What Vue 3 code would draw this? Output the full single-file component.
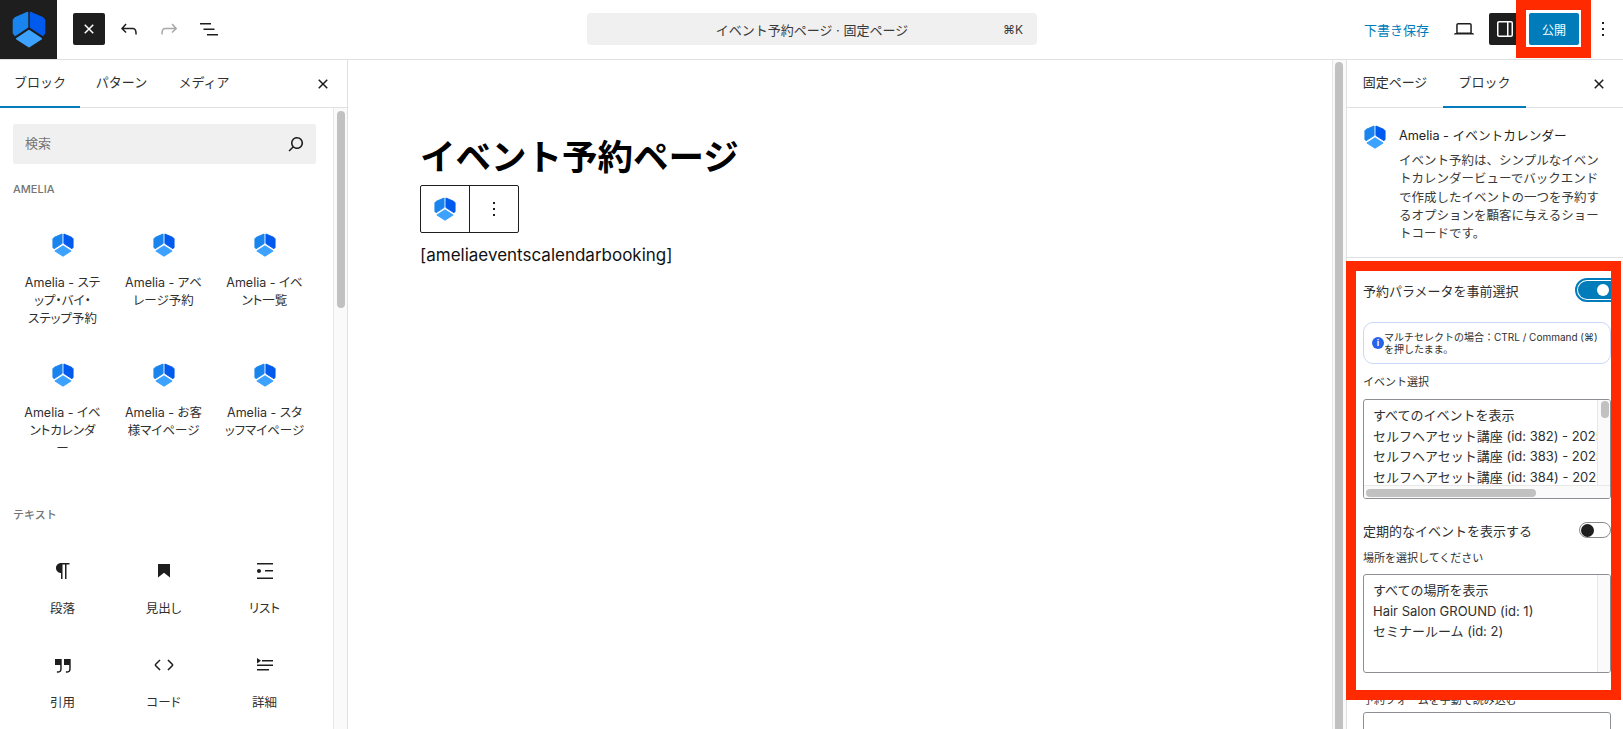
<script setup>
const ameliaBlocks = [
  'Amelia - ステ\nップ・バイ・\nステップ予約',
  'Amelia - アベ\nレージ予約',
  'Amelia - イベ\nント一覧',
  'Amelia - イベ\nントカレンダ\nー',
  'Amelia - お客\n様マイページ',
  'Amelia - スタ\nッフマイページ',
]

const textBlocks = [
  { label: '段落', d: 'M9.996 14v-.225l.004.0001V20h1.5V5.5H14V20h1.5V5.5h3V4H9.996c-2.761 0-5 2.239-5 5s2.239 5 5 5z' },
  { label: '見出し', d: 'M6 5V18.59L12 13.85L18 18.59V5H6Z' },
  { label: 'リスト', d: 'M4 4v1.5h16V4H4zm8 8.5h8V11h-8v1.5zM4 20h16v-1.5H4V20zm4-8c0-1.1-.9-2-2-2s-2 .9-2 2 .9 2 2 2 2-.9 2-2z' },
  { label: '引用', d: 'M13 6v6h5.2v4c0 .8-.2 1.4-.5 1.7-.6.6-1.6.6-2.5.5h-.3v1.5h.5c1 0 2.3-.1 3.3-1 .6-.6 1-1.6 1-2.8V6H13zm-9 6h5.2v4c0 .8-.2 1.4-.5 1.7-.6.6-1.6.6-2.5.5h-.3v1.5h.5c1 0 2.3-.1 3.3-1 .6-.6 1-1.6 1-2.8V6H4v6z' },
  { label: 'コード', d: 'M20.8 10.7l-4.3-4.3-1.1 1.1 4.3 4.3c.1.1.1.3 0 .4l-4.3 4.3 1.1 1.1 4.3-4.3c.7-.8.7-1.9 0-2.6zM4.2 11.8l4.3-4.3-1-1-4.3 4.3c-.7.7-.7 1.8 0 2.5l4.3 4.3 1.1-1.1-4.3-4.3c-.2-.1-.2-.3-.1-.4z' },
  { label: '詳細', d: 'M4 16h12v1.5H4V16Zm0-4.5h16V13H4v-1.5ZM9 7h11v1.5H9V7ZM4 5l4 2.75-4 2.75V5Z' },
]

const eventOptions = [
  'すべてのイベントを表示',
  'セルフヘアセット講座 (id: 382) - 2025',
  'セルフヘアセット講座 (id: 383) - 2025',
  'セルフヘアセット講座 (id: 384) - 2025',
]

const locationOptions = ['すべての場所を表示', 'Hair Salon GROUND (id: 1)', 'セミナールーム (id: 2)']

const closeIcon = 'M12 13.06l3.712 3.713 1.061-1.06L13.061 12l3.712-3.712-1.06-1.06L12 10.938 8.288 7.227l-1.061 1.06L10.939 12l-3.712 3.712 1.06 1.061L12 13.061z'
const kebabIcon = 'M13 19h-2v-2h2v2zm0-6h-2v-2h2v2zm0-6h-2V5h2v2z'
</script>

<template>
  <div class="editor">
    <svg class="defs" width="0" height="0">
      <symbol id="amelia" viewBox="0 0 24 26">
        <path d="M11 1 2.5 4.6 1 6.2v9.3l1.2 1.6L11 11.4Z" fill="#1a84ee" stroke="#1a84ee" stroke-linejoin="round" />
        <path d="M13 1 21.5 4.6 23 6.2v9.3l-1.2 1.6L13 11.4Z" fill="#005aee" stroke="#005aee" stroke-linejoin="round" />
        <path d="M12 14 20.5 19.5 12 25 3.5 19.5Z" fill="#3da2ff" stroke="#3da2ff" stroke-width="1.4" stroke-linejoin="round" />
      </symbol>
    </svg>

    <header class="topbar">
      <div class="logo"><svg width="34" height="37"><use href="#amelia" /></svg></div>
      <div class="tools">
        <button class="close-btn">
          <svg width="24" height="24" viewBox="0 0 24 24"><path :d="closeIcon" fill="#fff" /></svg>
        </button>
        <svg class="tool" width="24" height="24" viewBox="0 0 24 24"><path d="M18.3 11.7c-.6-.6-1.4-.9-2.3-.9H6.7l2.9-3.3-1.1-1-4.5 5L8.5 16l1-1-2.7-2.7H16c.5 0 .9.2 1.3.5 1 1 1 3.4 1 4.5v.3h1.5v-.2c0-1.5 0-4.3-1.5-5.7z" /></svg>
        <svg class="tool off" width="24" height="24" viewBox="0 0 24 24"><path d="M15.6 6.5l-1.1 1 2.9 3.3H8c-.9 0-1.7.3-2.3.9-1.4 1.5-1.4 4.2-1.4 5.6v.2h1.5v-.3c0-1.1 0-3.5 1-4.5.3-.3.7-.5 1.3-.5h9.2L14.5 15l1.1 1.1 4.6-4.6-4.6-5z" /></svg>
        <svg class="tool" width="24" height="24" viewBox="0 0 24 24"><path d="M3 6h11v1.5H3V6zm3.5 5.5h11V13h-11v-1.5zM21 17H10v1.5h11V17z" /></svg>
      </div>
      <div class="command">
        <span class="command-title">イベント予約ページ · 固定ページ</span>
        <span class="command-key">⌘K</span>
      </div>
      <div class="actions">
        <span class="draft">下書き保存</span>
        <svg class="tool laptop" width="24" height="24" viewBox="0 0 24 24"><path d="M20.5 16h-.7V8c0-1.1-.9-2-2-2H6.2c-1.1 0-2 .9-2 2v8h-.7c-.8 0-1.5.7-1.5 1.5h20c0-.8-.7-1.5-1.5-1.5zM5.7 8c0-.3.2-.5.5-.5h11.6c.3 0 .5.2.5.5v7.6H5.7V8z" /></svg>
        <span class="sidebar-btn">
          <svg width="24" height="24" viewBox="0 0 24 24"><path d="M18 4H6c-1.1 0-2 .9-2 2v12c0 1.1.9 2 2 2h12c1.1 0 2-.9 2-2V6c0-1.1-.9-2-2-2zm-4 14.5H6c-.3 0-.5-.2-.5-.5V6c0-.3.2-.5.5-.5h8v13zm4.5-.5c0 .3-.2.5-.5.5h-2.5v-13H18c.3 0 .5.2.5.5v12z" fill="#fff" /></svg>
        </span>
        <button class="publish">公開</button>
        <svg class="tool kebab" width="24" height="24" viewBox="0 0 24 24"><path :d="kebabIcon" /></svg>
      </div>
    </header>

    <div class="workspace">
      <aside class="inserter">
        <div class="tabs">
          <span class="tab active">ブロック</span>
          <span class="tab">パターン</span>
          <span class="tab">メディア</span>
          <svg class="tab-close" width="24" height="24" viewBox="0 0 24 24"><path :d="closeIcon" /></svg>
        </div>
        <div class="inserter-body">
          <div class="inserter-list">
            <div class="search">
              <span>検索</span>
              <svg width="24" height="24" viewBox="0 0 24 24"><path d="M13 5c-3.3 0-6 2.7-6 6 0 1.4.5 2.7 1.3 3.7l-3.8 3.8 1.1 1.1 3.8-3.8c1 .8 2.3 1.3 3.7 1.3 3.3 0 6-2.7 6-6S16.3 5 13 5zm0 10.5c-2.5 0-4.5-2-4.5-4.5s2-4.5 4.5-4.5 4.5 2 4.5 4.5-2 4.5-4.5 4.5z" fill="#1e1e1e" /></svg>
            </div>
            <h3 class="group-title">AMELIA</h3>
            <div class="block-grid amelia-grid">
              <div v-for="name in ameliaBlocks" :key="name" class="block-item">
                <svg width="22" height="24"><use href="#amelia" /></svg>
                <span>{{ name }}</span>
              </div>
            </div>
            <h3 class="group-title text-title">テキスト</h3>
            <div class="block-grid text-grid">
              <div v-for="item in textBlocks" :key="item.label" class="block-item">
                <svg width="24" height="24" viewBox="0 0 24 24"><path :d="item.d" fill="#1e1e1e" /></svg>
                <span>{{ item.label }}</span>
              </div>
            </div>
          </div>
          <div class="scroll-track"><div class="scroll-thumb"></div></div>
        </div>
      </aside>

      <main class="canvas">
        <div class="page">
          <h1>イベント予約ページ</h1>
          <div class="block-toolbar">
            <span class="toolbar-cell"><svg width="22" height="24"><use href="#amelia" /></svg></span>
            <span class="toolbar-cell">
              <svg width="24" height="24" viewBox="0 0 24 24"><path :d="kebabIcon" fill="#1e1e1e" /></svg>
            </span>
          </div>
          <p class="shortcode">[ameliaeventscalendarbooking]</p>
        </div>
        <div class="canvas-scroll"><div class="canvas-thumb"></div></div>
      </main>

      <aside class="settings">
        <div class="tabs settings-tabs">
          <span class="tab">固定ページ</span>
          <span class="tab active">ブロック</span>
          <svg class="tab-close" width="24" height="24" viewBox="0 0 24 24"><path :d="closeIcon" /></svg>
        </div>
        <div class="block-card">
          <svg width="22" height="24"><use href="#amelia" /></svg>
          <div>
            <div class="card-title">Amelia - イベントカレンダー</div>
            <p class="card-desc">イベント予約は、シンプルなイベントカレンダービューでバックエンドで作成したイベントの一つを予約するオプションを顧客に与えるショートコードです。</p>
          </div>
        </div>
        <div class="params">
          <div class="switch-row">
            <span>予約パラメータを事前選択</span>
            <span class="switch on"><i></i></span>
          </div>
          <div class="notice">
            <span class="notice-icon">i</span>
            <span>マルチセレクトの場合：CTRL / Command (⌘) を押したまま。</span>
          </div>
          <label class="field-label">イベント選択</label>
          <div class="listbox events">
            <div class="options">
              <div v-for="o in eventOptions" :key="o">{{ o }}</div>
            </div>
            <div class="v-track"><div class="v-thumb"></div></div>
            <div class="h-track"><div class="h-thumb"></div></div>
          </div>
          <div class="switch-row second">
            <span>定期的なイベントを表示する</span>
            <span class="switch"><i></i></span>
          </div>
          <label class="field-label place">場所を選択してください</label>
          <div class="listbox places">
            <div class="options">
              <div v-for="o in locationOptions" :key="o">{{ o }}</div>
            </div>
            <div class="v-track"></div>
          </div>
          <label class="field-label manual">予約フォームを手動で読み込む</label>
          <div class="manual-input"></div>
        </div>
      </aside>
    </div>

    <!-- red annotation boxes from the article screenshot -->
    <div class="mark mark-publish"></div>
    <div class="mark mark-params"></div>
  </div>
</template>

<style scoped>
.editor {
  position: relative;
  width: 1623px;
  height: 729px;
  overflow: hidden;
  display: flex;
  flex-direction: column;
  background: #fff;
  color: #1e1e1e;
  font-family: Inter, "Noto Sans CJK JP", sans-serif;
  font-size: 13px;
}

.defs {
  position: absolute;
}

button {
  border: 0;
  padding: 0;
  font: inherit;
}

/* Top bar */
.topbar {
  height: 60px;
  flex: none;
  display: flex;
  align-items: flex-start;
  border-bottom: 1px solid #e0e0e0;
  box-sizing: border-box;
}

.logo {
  width: 57px;
  height: 59px;
  background: #1e1e1e;
  display: flex;
  align-items: center;
  justify-content: center;
}

.tools {
  display: flex;
  align-items: center;
  height: 32px;
  margin: 13px 0 0 16px;
  width: 514px;
}

.close-btn {
  width: 32px;
  height: 32px;
  background: #1e1e1e;
  border-radius: 2px;
  display: flex;
  align-items: center;
  justify-content: center;
  margin-right: 12px;
}

.tool {
  fill: #1e1e1e;
  flex: none;
}

.tools .tool {
  margin-right: 16px;
}

.tool.off {
  fill: #a8a8a8;
}

.command {
  width: 450px;
  height: 32px;
  margin-top: 13px;
  background: #f0f0f0;
  border-radius: 4px;
  display: flex;
  align-items: center;
  position: relative;
  justify-content: center;
  font-size: 13px;
  color: #3a3a3a;
}

.command-key {
  position: absolute;
  right: 14px;
  font-size: 12px;
}

.actions {
  flex: 1;
  display: flex;
  align-items: center;
  height: 32px;
  margin-top: 13px;
  padding-left: 327px;
}

.draft {
  color: #007cba;
  font-size: 13px;
  width: 64px;
  white-space: nowrap;
}

.laptop {
  margin-left: 24px;
}

.sidebar-btn {
  width: 32px;
  height: 32px;
  margin-left: 13px;
  background: #1e1e1e;
  border-radius: 2px;
  display: flex;
  align-items: center;
  justify-content: center;
  flex: none;
}

.publish {
  width: 50px;
  height: 32px;
  margin-left: 8px;
  background: #007cba;
  color: #fff;
  border-radius: 2px;
  font-size: 12px;
  flex: none;
}

.kebab {
  margin-left: 12px;
}

/* Panels */
.workspace {
  flex: 1;
  min-height: 0;
  display: flex;
}

.tabs {
  height: 48px;
  flex: none;
  display: flex;
  align-items: stretch;
  border-bottom: 1px solid #e0e0e0;
  box-sizing: border-box;
  position: relative;
}

.tab {
  display: flex;
  align-items: center;
  justify-content: center;
  width: 80px;
  padding-bottom: 4px;
  box-sizing: border-box;
  position: relative;
  font-size: 13px;
  color: #2f2f2f;
}

.tab.active::after {
  content: "";
  position: absolute;
  left: 0;
  right: 0;
  bottom: -1px;
  height: 2px;
  background: #007cba;
}

.tab-close {
  position: absolute;
  right: 12px;
  top: 12px;
  fill: #1e1e1e;
}

.inserter {
  width: 348px;
  flex: none;
  display: flex;
  flex-direction: column;
  border-right: 1px solid #e0e0e0;
  box-sizing: border-box;
}

.inserter .tab:nth-child(2) {
  width: 83px;
}

.inserter .tab:nth-child(3) {
  width: 82px;
}

.inserter-body {
  flex: 1;
  min-height: 0;
  display: flex;
}

.inserter-list {
  flex: 1;
  min-width: 0;
  padding: 16px 17px 0 13px;
  overflow: hidden;
}

.search {
  height: 40px;
  background: #f0f0f0;
  border-radius: 2px;
  display: flex;
  align-items: center;
  justify-content: space-between;
  padding: 0 8px 0 12px;
  color: #757575;
  font-size: 13px;
}

.search span {
  padding-bottom: 3px;
}

.group-title {
  margin: 18px 0 0;
  font-size: 11px;
  line-height: 14px;
  font-weight: 500;
  color: #757575;
}

.text-title {
  margin-top: 0;
}

.block-grid {
  display: grid;
  grid-template-columns: repeat(3, 101px);
  margin-left: -1px;
}

.amelia-grid {
  grid-auto-rows: 130px;
  margin-top: 37px;
  height: 275px;
}

.text-grid {
  grid-auto-rows: 94px;
  margin-top: 37px;
}

.block-item {
  display: flex;
  flex-direction: column;
  align-items: center;
  text-align: center;
  font-size: 12.5px;
  line-height: 18px;
  color: #2f2f2f;
}

.block-item span {
  margin-top: 17px;
  white-space: pre-line;
  font-feature-settings: "palt";
}

.text-grid .block-item span {
  margin-top: 17px;
}

.scroll-track {
  width: 14px;
  flex: none;
  background: #fafafa;
  border-left: 1px solid #e8e8e8;
  box-sizing: border-box;
}

.scroll-thumb {
  width: 8px;
  height: 197px;
  margin: 3px 0 0 3px;
  border-radius: 4px;
  background: #c1c1c1;
}

.canvas {
  flex: 1;
  min-width: 0;
  display: flex;
}

.page {
  flex: 1;
  padding: 60px 0 0 72px;
}

h1 {
  margin: 14px 0 0;
  font-size: 35.5px;
  line-height: 48px;
  font-weight: 700;
  color: #000;
  white-space: nowrap;
}

.block-toolbar {
  display: inline-flex;
  margin-top: 3px;
  border: 1px solid #1e1e1e;
  border-radius: 2px;
  height: 48px;
  box-sizing: border-box;
  vertical-align: top;
}

.toolbar-cell {
  width: 48px;
  display: flex;
  align-items: center;
  justify-content: center;
}

.toolbar-cell + .toolbar-cell {
  border-left: 1px solid #1e1e1e;
}

.shortcode {
  margin: 10px 0 0;
  font-size: 17px;
  line-height: 24px;
  color: #111;
}

.canvas-scroll {
  width: 14px;
  flex: none;
  border-left: 1px solid #e8e8e8;
  background: #fafafa;
  box-sizing: border-box;
}

.canvas-thumb {
  width: 8px;
  height: 800px;
  margin: 2px 0 0 2px;
  border-radius: 4px;
  background: #c1c1c1;
}

.settings {
  width: 277px;
  flex: none;
  display: flex;
  flex-direction: column;
  border-left: 1px solid #e0e0e0;
  box-sizing: border-box;
}

.settings .tab:nth-child(1) {
  width: 96px;
}

.settings .tab:nth-child(2) {
  width: 83px;
}

.block-card {
  display: flex;
  gap: 13px;
  padding: 16px 0 15px 17px;
  border-bottom: 1px solid #e0e0e0;
  flex: none;
  height: 150px;
  box-sizing: border-box;
}

.block-card > svg {
  flex: none;
  margin-top: 1px;
}

.card-title {
  font-size: 12.7px;
  line-height: 18px;
  margin-top: 3px;
}

.card-desc {
  margin: 7px 0 0;
  width: 210px;
  font-size: 12.5px;
  line-height: 18.3px;
  color: #3a3a3a;
  word-break: break-all;
}

.params {
  padding: 20px 0 0 16px;
  width: 264px;
  box-sizing: border-box;
}

.switch-row {
  display: flex;
  justify-content: space-between;
  align-items: center;
  height: 24px;
  font-size: 13px;
  white-space: nowrap;
  color: #2f2f2f;
}

.switch {
  width: 32px;
  height: 16px;
  border: 1px solid #8a8a8a;
  border-radius: 9px;
  box-sizing: border-box;
  display: flex;
  align-items: center;
  padding-left: 1px;
  flex: none;
}

.switch i {
  width: 13px;
  height: 13px;
  border-radius: 50%;
  background: #1e1e1e;
}

.switch.on {
  width: 33px;
  height: 18px;
  background: #007cba;
  border: 0;
  border-radius: 9px 0 0 9px;
  outline: 2px solid #007cba;
  outline-offset: 1px;
  justify-content: flex-end;
  padding-right: 2px;
  clip-path: inset(-4px 0 -4px -4px);
}

.switch.on i {
  background: #fff;
  width: 12px;
  height: 12px;
}

.notice {
  margin-top: 20px;
  height: 42px;
  box-sizing: border-box;
  border: 1px solid #c9d8f8;
  border-radius: 10px;
  display: flex;
  align-items: center;
  padding: 0 6px 0 8px;
  font-size: 10px;
  line-height: 12.5px;
  color: #2f2f2f;
}

.notice-icon {
  width: 12px;
  height: 12px;
  border-radius: 50%;
  background: #2563eb;
  color: #fff;
  font-size: 9px;
  line-height: 12px;
  font-weight: 700;
  text-align: center;
  flex: none;
}

.field-label {
  display: block;
  font-size: 11px;
  line-height: 14px;
  margin-top: 11px;
  color: #2f2f2f;
}

.listbox {
  position: relative;
  display: grid;
  grid-template-columns: 1fr 13px;
  border: 1px solid #8c8f94;
  border-radius: 3px;
  box-sizing: border-box;
  overflow: hidden;
}

.events {
  height: 100px;
  margin-top: 10px;
  grid-template-rows: 1fr 13px;
}

.places {
  height: 99px;
  margin-top: 9px;
}

.options {
  padding: 5px 0 0 9px;
  font-size: 13px;
  line-height: 20.5px;
  white-space: nowrap;
  overflow: hidden;
  color: #2f2f2f;
  min-width: 0;
}

.v-track {
  background: #fafafa;
  border-left: 1px solid #e8e8e8;
}

.v-thumb {
  width: 8px;
  height: 17px;
  margin: 1px 0 0 3px;
  border-radius: 4px;
  background: #c1c1c1;
}

.h-track {
  grid-column: 1 / 3;
  background: #fafafa;
  border-top: 1px solid #e8e8e8;
}

.h-thumb {
  width: 170px;
  height: 8px;
  margin: 3px 0 0 2px;
  border-radius: 4px;
  background: #c1c1c1;
}

.second {
  margin-top: 19px;
}

.place {
  margin-top: 9px;
}

.manual {
  margin-top: 20px;
  color: #2f2f2f;
}

.manual-input {
  margin-top: 5px;
  height: 40px;
  border: 1px solid #8c8f94;
  border-radius: 3px;
}

/* Red annotation boxes, on top of the screenshot */
.mark {
  position: absolute;
  box-sizing: border-box;
  border: 10px solid #ff2a00;
}

.mark-publish {
  left: 1516px;
  top: 0;
  width: 75px;
  height: 58px;
  border-bottom-width: 11px;
}

.mark-params {
  left: 1346px;
  top: 261px;
  width: 275px;
  height: 439px;
}
</style>

<style>
html, body {
  margin: 0;
  overflow: hidden;
}
</style>
